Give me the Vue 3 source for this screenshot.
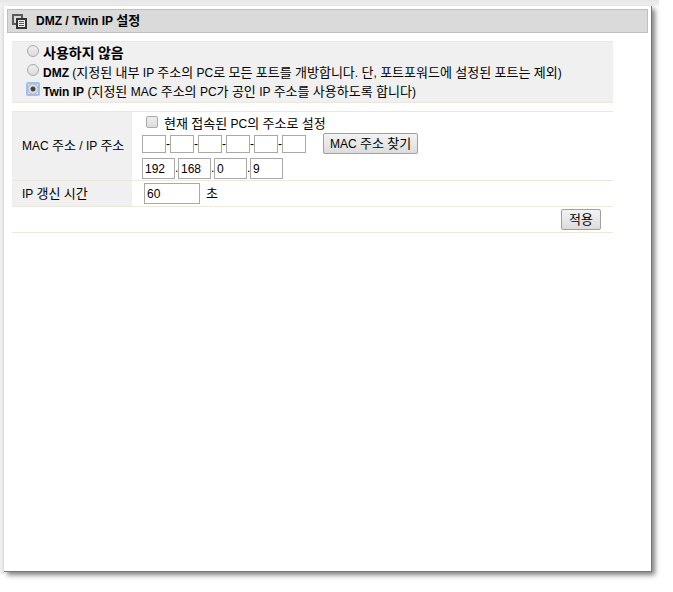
<script setup>
import { h, ref } from 'vue'

const mode = ref('twin')
const useCurrent = ref(false)
const mac = ref(['', '', '', '', '', ''])
const ip = ref(['192', '168', '0', '9'])
const renewal = ref('60')

const modes = [
  { value: 'off', name: '사용하지 않음', note: '' },
  { value: 'dmz', name: 'DMZ', note: ' (지정된 내부 IP 주소의 PC로 모든 포트를 개방합니다. 단, 포트포워드에 설정된 포트는 제외)' },
  { value: 'twin', name: 'Twin IP', note: ' (지정된 MAC 주소의 PC가 공인 IP 주소를 사용하도록 합니다)' },
]

// Wraps each run of Hangul so it can be set one size larger than the Latin text.
const Mixed = ({ text }) =>
  h('span', { class: 'mixed' }, text.split(/([가-힣]+)/).filter(Boolean).map((part) =>
    /[가-힣]/.test(part) ? h('span', { class: 'ko' }, part) : part
  ))
Mixed.props = ['text']
</script>

<template>
  <div class="page">
    <main class="panel">
      <header class="title-bar">
        <svg class="icon" viewBox="0 0 15 15" width="15" height="15" aria-hidden="true">
          <path d="M4 10H1V1h9v3" fill="none" stroke="#5c5c5c" stroke-width="2" />
          <rect x="5" y="5" width="9" height="9" fill="#f0f0f0" stroke="#333" stroke-width="2" />
          <path d="M7 7.5h5M7 9.5h5M7 11.5h5" stroke="#555" stroke-width="1" />
        </svg>
        <h1><Mixed text="DMZ / Twin IP 설정" /></h1>
      </header>

      <form class="content" @submit.prevent>
        <div class="modes" role="radiogroup" aria-label="DMZ / Twin IP 설정">
          <label v-for="m in modes" :key="m.value" class="mode">
            <input v-model="mode" class="radio" type="radio" name="mode" :value="m.value" />
            <span class="mode-text"><b><Mixed :text="m.name" /></b><Mixed :text="m.note" /></span>
          </label>
        </div>

        <table class="settings">
          <tbody>
            <tr>
              <th scope="row"><Mixed text="MAC 주소 / IP 주소" /></th>
              <td class="address">
                <label class="current">
                  <input v-model="useCurrent" class="check" type="checkbox" />
                  <Mixed text="현재 접속된 PC의 주소로 설정" />
                </label>
                <div class="mac-row">
                  <div class="fields">
                    <template v-for="(part, i) in mac" :key="i">
                      <span v-if="i" class="dash">-</span>
                      <input v-model="mac[i]" class="box mac" type="text" maxlength="2" :aria-label="`MAC 주소 ${i + 1}`" />
                    </template>
                  </div>
                  <button class="btn" type="button"><Mixed text="MAC 주소 찾기" /></button>
                </div>
                <div class="fields">
                  <template v-for="(part, i) in ip" :key="i">
                    <span v-if="i" class="dot">.</span>
                    <input v-model="ip[i]" class="box ip" type="text" maxlength="3" :aria-label="`IP 주소 ${i + 1}`" />
                  </template>
                </div>
              </td>
            </tr>
            <tr>
              <th scope="row"><label for="renewal"><Mixed text="IP 갱신 시간" /></label></th>
              <td class="renewal">
                <div class="fields">
                  <input id="renewal" v-model="renewal" class="box time" type="text" />
                  <span class="unit"><Mixed text="초" /></span>
                </div>
              </td>
            </tr>
            <tr>
              <td class="actions" colspan="2">
                <button class="btn" type="submit"><Mixed text="적용" /></button>
              </td>
            </tr>
          </tbody>
        </table>
      </form>
    </main>
  </div>
</template>

<style>
body {
  background: #fff;
}

.mixed .ko {
  font-size: 13px;
}

h1 .mixed .ko {
  font-size: 13px;
}

b .mixed .ko {
  font-size: 14px;
}
</style>

<style scoped>
.page {
  box-sizing: border-box;
  min-height: 100vh;
  margin-right: 14px;
  padding: 6px 7px 20px 4px;
  background: linear-gradient(#e6e6e6, #f2f2f2) 0 0 / 100% 6px no-repeat,
    linear-gradient(90deg, #f2f2f2, #e8e8e8) 0 0 / 4px calc(100% - 18px) no-repeat;
  color: #000;
  font: 12px/19px "Liberation Sans", "Noto Sans CJK KR", sans-serif;
}

.panel {
  box-sizing: border-box;
  min-height: calc(100vh - 26px);
  padding: 3px;
  border-right: 1px solid #777;
  border-bottom: 1px solid #777;
  background: #fff;
  box-shadow: 3px 3px 5px rgba(0, 0, 0, 0.5);
}

.title-bar {
  display: flex;
  align-items: center;
  gap: 9px;
  box-sizing: border-box;
  height: 24px;
  padding: 0 4px;
  border: 1px solid #bebebe;
  background: #dadada;
}

.icon {
  flex: none;
}

h1 {
  margin: 0;
  font-size: 12px;
  line-height: 22px;
}

.content {
  padding: 8px 35px 0 5px;
}

.modes {
  box-sizing: border-box;
  padding: 2px 0 1px 14px;
  border-top: 1px solid #ebe9dc;
  border-bottom: 1px solid #ebe9dc;
  background: #f0f0f0;
}

.mode {
  display: flex;
  align-items: flex-start;
  gap: 3px;
  height: 19px;
}

.mode-text {
  line-height: 19px;
  white-space: pre;
}

.radio,
.check {
  flex: none;
  appearance: none;
  box-sizing: border-box;
  margin: 0;
  border: 1px solid #aaa;
  background: linear-gradient(#eee, #dcdcdc);
}

.radio {
  width: 12px;
  height: 12px;
  margin: 1px;
  border-radius: 50%;
}

.radio:checked {
  border: 2px solid #9dbff5;
  width: 14px;
  height: 14px;
  margin: 0;
  border-radius: 2px;
  background: radial-gradient(circle, #444 0 2px, #e0e0e0 3px 4px, #b4b4b4 5px, #dce6f6 6px);
}

.settings {
  width: 100%;
  margin-top: 8px;
  border-top: 1px solid #ebe9dc;
  border-collapse: collapse;
}

th,
td {
  padding: 0;
  border-bottom: 1px solid #ebe9dc;
  text-align: left;
}

th {
  width: 110px;
  padding-left: 10px;
  background: #f0f0f0;
  font-weight: normal;
}

.address {
  padding: 2px 0 1px 10px;
}

.renewal {
  padding: 2px 0 2px 12px;
}

.current {
  display: flex;
  align-items: center;
  gap: 6px;
  height: 19px;
  padding-left: 4px;
}

.check {
  width: 12px;
  height: 12px;
  margin-bottom: 4px;
  border-radius: 2px;
}

.mac-row {
  display: flex;
  align-items: center;
  gap: 17px;
  margin-bottom: 4px;
}

.fields {
  display: flex;
  align-items: center;
}

.dash {
  width: 4px;
  line-height: 18px;
}

.dot {
  width: 3px;
  line-height: 21px;
}

.box {
  box-sizing: border-box;
  height: 21px;
  padding: 0 2px;
  border: 1px solid #a9a9a9;
  border-radius: 0;
  background: #fff;
  color: #000;
  font: inherit;
}

.mac {
  width: 24px;
  height: 18px;
}

.ip {
  width: 33px;
}

.time {
  width: 56px;
}

.unit {
  margin-left: 6px;
}

.btn {
  box-sizing: border-box;
  height: 21px;
  padding: 0 7px;
  border: 1px solid #a0a0a0;
  border-radius: 2px;
  background: linear-gradient(#f3f3f3, #dcdcdc);
  color: #000;
  font: inherit;
  line-height: 19px;
  white-space: nowrap;
}

.mac-row .btn {
  padding: 0 6px;
}

.actions {
  padding: 2px 12px 2px 0;
  text-align: right;
}

.actions .btn {
  display: block;
  margin-left: auto;
}
</style>
